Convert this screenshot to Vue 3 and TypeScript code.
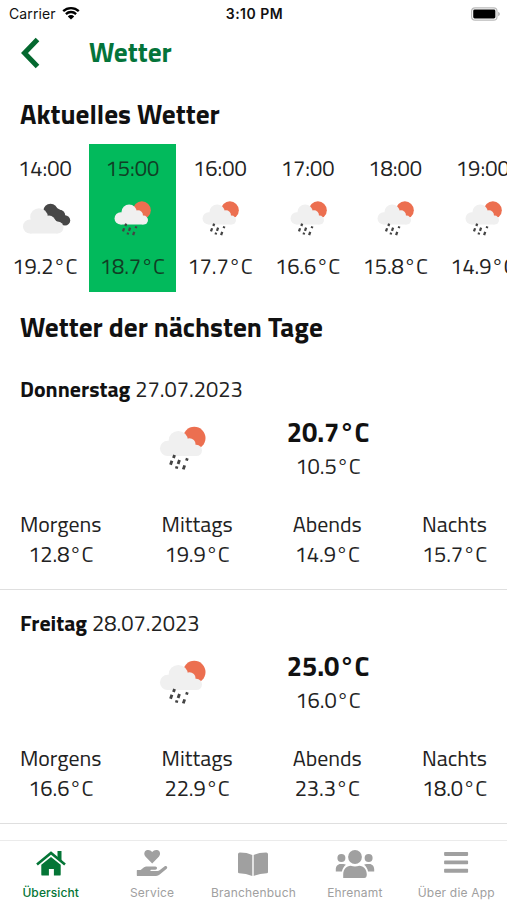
<script setup lang="ts">
interface Hour {
  time: string
  temp: string
  icon: 'cloud' | 'rain'
  active?: boolean
}
interface Day {
  name: string
  date: string
  max: string
  min: string
  parts: { label: string; temp: string }[]
}

const hours: Hour[] = [
  { time: '14:00', temp: '19.2', icon: 'cloud' },
  { time: '15:00', temp: '18.7', icon: 'rain', active: true },
  { time: '16:00', temp: '17.7', icon: 'rain' },
  { time: '17:00', temp: '16.6', icon: 'rain' },
  { time: '18:00', temp: '15.8', icon: 'rain' },
  { time: '19:00', temp: '14.9', icon: 'rain' },
]

const days: Day[] = [
  {
    name: 'Donnerstag',
    date: '27.07.2023',
    max: '20.7',
    min: '10.5',
    parts: [
      { label: 'Morgens', temp: '12.8' },
      { label: 'Mittags', temp: '19.9' },
      { label: 'Abends', temp: '14.9' },
      { label: 'Nachts', temp: '15.7' },
    ],
  },
  {
    name: 'Freitag',
    date: '28.07.2023',
    max: '25.0',
    min: '16.0',
    parts: [
      { label: 'Morgens', temp: '16.6' },
      { label: 'Mittags', temp: '22.9' },
      { label: 'Abends', temp: '23.3' },
      { label: 'Nachts', temp: '18.0' },
    ],
  },
]

const drops =
  'M16.9 31.6 15.8 34.6M14.200 37.500 12.800 41.600M21.900 36.800 20.500 40.900M29.900 35 29.100 37.400M19.400 43.200 18.700 45.500M27.200 42.200 25.800 46.300'
</script>

<template>
  <div class="screen">
    <header class="status">
      <div class="carrier">
        <span>Carrier</span>
        <svg class="wifi" viewBox="0 0 18 14">
          <path d="M1.2 5.2a11.2 11.2 0 0 1 15.6 0M3.9 8.1a7.3 7.3 0 0 1 10.2 0" fill="none" stroke="#000" stroke-width="2.3" />
          <path d="M9 13.6 5.8 10.4a4.6 4.6 0 0 1 6.4 0Z" />
        </svg>
      </div>
      <div class="clock">3:10 PM</div>
      <div class="power">
        <svg class="battery" viewBox="0 0 30 14">
          <rect x=".6" y=".6" width="26.3" height="12.8" rx="3.6" fill="#fff" stroke="#bbb" stroke-width="1.2" />
          <rect x="2.3" y="2.3" width="22.9" height="9.4" rx="1.5" />
          <path d="M28 4.7q2 .8 2 2.3t-2 2.3Z" fill="#bbb" />
        </svg>
      </div>
    </header>

    <div class="titlebar">
      <svg class="back" viewBox="0 0 20 32"><path d="M17.500 2.500 4.500 16 17.500 29.500" fill="none" stroke="#04682f" stroke-width="5" /></svg>
      <h1>Wetter</h1>
    </div>

    <main class="content">
      <h2 class="now">Aktuelles Wetter</h2>
      <div class="hours">
        <div v-for="h in hours" :key="h.time" class="hour" :class="{ active: h.active }">
          <span class="time">{{ h.time }}</span>
          <svg v-if="h.icon === 'cloud'" class="cloud" viewBox="0 0 48 32">
            <g fill="#474747">
              <circle cx="28.5" cy="9.8" r="7.1" /><circle cx="37.8" cy="14.2" r="5.4" /><circle cx="43" cy="19.4" r="5.2" />
              <path d="m30 4 10 6-2 13-10-8Z" />
            </g>
            <g fill="#eee">
              <circle cx="8" cy="25.5" r="7" /><circle cx="17" cy="16" r="8.8" /><circle cx="27" cy="21" r="6.5" /><circle cx="35.5" cy="26.5" r="6" />
              <path d="M8 20h24v5l3.500 7.500H8Z" />
            </g>
          </svg>
          <svg v-else class="rain" viewBox="0 0 50 50">
            <circle cx="37" cy="14.4" r="11.5" fill="#ec6f50" />
            <g class="puff">
              <circle cx="9.8" cy="24.9" r="7.8" /><circle cx="20.7" cy="17" r="9.9" /><circle cx="32" cy="20.9" r="6.4" /><circle cx="39.2" cy="27" r="5.7" />
              <path d="M9 20h25l5 7v5.7H9.8Z" />
            </g>
            <path class="drops" :d="drops" />
          </svg>
          <span class="temp">{{ h.temp }}°C</span>
        </div>
      </div>

      <h2 class="next">Wetter der nächsten Tage</h2>
      <section v-for="d in days" :key="d.name" class="day">
        <div class="date"><b>{{ d.name }}</b> <span>{{ d.date }}</span></div>
        <div class="summary">
          <svg class="rain" viewBox="0 0 50 50">
            <circle cx="37" cy="14.4" r="11.5" fill="#ec6f50" />
            <g class="puff">
              <circle cx="9.8" cy="24.9" r="7.8" /><circle cx="20.7" cy="17" r="9.9" /><circle cx="32" cy="20.9" r="6.4" /><circle cx="39.2" cy="27" r="5.7" />
              <path d="M9 20h25l5 7v5.7H9.8Z" />
            </g>
            <path class="drops" :d="drops" />
          </svg>
          <div class="range">
            <strong>{{ d.max }}°C</strong>
            <span class="temp">{{ d.min }}°C</span>
          </div>
        </div>
        <div class="parts">
          <div v-for="p in d.parts" :key="p.label" class="part">
            <span class="label">{{ p.label }}</span>
            <span class="temp">{{ p.temp }}°C</span>
          </div>
        </div>
      </section>
    </main>

    <nav class="tabs">
      <a class="tab current">
        <svg viewBox="0 0 32 28">
          <path d="M2 15.500 16 4l14 11.500" fill="none" stroke="currentColor" stroke-width="2.600" />
          <path d="M22.500 2H26.500v10L22.500 8.500ZM6.300 15.700 16 7.900l9.700 7.800v9.700q0 1.200-1.200 1.200h-5.600v-6.600h-5v6.600H7.500q-1.200 0-1.200-1.200Z" />
        </svg>
        <span>Übersicht</span>
      </a>
      <a class="tab">
        <svg viewBox="0 0 32 28">
          <path d="m16.200 14.500-6.600-6.800C7.500 5.500 8.200 2.300 10.400 1.300c2-.9 4.300-.3 5.800 1.600 1.500-1.900 3.800-2.500 5.800-1.600 2.200 1 2.900 4.200.8 6.400Z" />
          <path d="M1.300 20.900h3.300l2.500-2c1.300-1 2.800-1.400 4.400-1.400h7.800c2.300 0 2.300 3.200 0 3.200h-4.200q-.8 0-.8.6t.8.600h6.200c1 0 1.800-.3 2.600-.9l4.500-3.500c2-1.400 3.800.7 2.300 2.200l-7 5.900c-1 .9-2.200 1.300-3.600 1.300H1.300Q.8 26.900.8 26.300v-4.800q0-.6.500-.6Z" />
        </svg>
        <span>Service</span>
      </a>
      <a class="tab">
        <svg viewBox="0 0 32 28">
          <path d="M1 5.300Q1 3.500 3 3.600q7 0 12.300 2.300v21Q9 24.400 2.200 24.300 1 24.200 1 23ZM31 5.300q0-1.800-2-1.700-7 0-12.300 2.300v21q6.300-2.500 13.100-2.600 1.200-.1 1.200-1.300Z" />
        </svg>
        <span>Branchenbuch</span>
      </a>
      <a class="tab">
        <svg class="wide" viewBox="0 0 40 28">
          <circle cx="20" cy="8" r="6.900" /><circle cx="6.400" cy="9" r="4" /><circle cx="33.600" cy="9" r="4" />
          <path d="M8.200 29v-3.500c0-5 3.200-8.700 7.500-8.700q4.300 1.400 8.600 0c4.300 0 7.500 3.700 7.500 8.700 0 2.500-1 3.500-2.500 3.500ZM.8 22.600v-2.300c0-3 2-5.400 4.700-5.400h2.800c1 0 1.800.3 2.600.8-2 1.700-3.400 3.700-4 6.900ZM39.200 22.600v-2.300c0-3-2-5.400-4.700-5.400h-2.800c-1 0-1.800.3-2.600.8 2 1.700 3.400 3.700 4 6.900Z" />
        </svg>
        <span>Ehrenamt</span>
      </a>
      <a class="tab">
        <svg viewBox="0 0 32 28">
          <path d="M4.900 3h22.400q.8 0 .8.800v2.300q0 .8-.8.800H4.900q-.8 0-.8-.8V3.800q0-.8.800-.8Zm0 8.400h22.400q.8 0 .8.800v2.300q0 .8-.8.800H4.900q-.8 0-.8-.8v-2.300q0-.8.800-.8Zm0 8.400h22.400q.8 0 .8.800v2.300q0 .8-.8.800H4.900q-.8 0-.8-.8v-2.300q0-.8.800-.8Z" />
        </svg>
        <span>Über die App</span>
      </a>
    </nav>
  </div>
</template>

<style>
body { background: #fff; overflow: hidden; }
</style>

<style scoped>
.screen {
  display: flex; flex-direction: column;
  width: 507px; height: 900px; overflow: hidden;
  background: #fff; color: #222;
  font-family: "Titillium Web", Roboto, sans-serif;
}
svg { display: block; flex: none; overflow: visible; }
.status {
  display: grid; grid-template-columns: 1fr auto 1fr; align-items: center;
  height: 27px; padding: 0 7px 0 9px; flex: none;
  font-family: Inter, sans-serif; color: #111;
}
.carrier { display: flex; align-items: center; gap: 6px; font-size: 14px; letter-spacing: .1px; }
.wifi { width: 18px; height: 14px; margin-top: -2px; }
.clock { font-size: 14px; font-weight: 600; letter-spacing: .5px; }
.power { display: flex; justify-content: flex-end; }
.battery { width: 29px; height: 14px; }
.titlebar { display: flex; align-items: center; height: 52px; padding-left: 20px; flex: none; }
.back { width: 20px; height: 32px; }
h1 { margin: -2px 0 0 49px; font-size: 27.3px; line-height: 32px; font-weight: 700; color: #04743a; }
.content { flex: 1; min-height: 0; overflow: hidden; }
h2 { margin: 0; padding-left: 20px; font-size: 27.3px; font-weight: 700; line-height: 32px; color: #111; }
.now { padding-top: 19px; height: 46px; }
.hours { display: grid; grid-template-columns: repeat(6, 87.6px); padding-left: 1px; height: 148px; }
.hour { display: flex; flex-direction: column; align-items: center; padding-top: 11px; height: 137px; }
.active { background: #02ba5c; color: #113e25; }
.time, .temp { font-size: 21.9px; line-height: 26px; white-space: nowrap; }
.temp { letter-spacing: -.1px; }
.hour .rain { width: 39px; height: 39px; margin: 18px 0 15px 1px; }
.cloud { width: 48px; height: 32px; margin: 20px 0 20px 2px; }
.puff { fill: #f0f0f0; }
.drops { stroke: #444; stroke-width: 2.9; fill: none; }
.next { padding-top: 19px; height: 45px; }
.day { height: 233px; border-bottom: 1px solid #dfdfdf; }
.date { padding: 20px 20px 0; font-size: 21.9px; line-height: 26px; }
.date b { color: #111; }
.summary { display: grid; grid-template-columns: 50px auto; gap: 79px; padding: 13px 0 0 157px; height: 68px; }
.rain { width: 49px; height: 49px; margin: 9px 0 0 1px; }
.range { display: flex; flex-direction: column; align-items: center; width: 84px; }
strong { font-size: 27.3px; line-height: 34px; color: #111; white-space: nowrap; letter-spacing: -.1px; }
.range .temp { line-height: 34px; }
.parts { display: flex; justify-content: space-between; padding: 26px 20px 0; }
.part { display: flex; flex-direction: column; align-items: center; }
.label { font-size: 21.9px; line-height: 30px; }
.part .temp { line-height: 30px; }
.tabs {
  display: grid; grid-template-columns: repeat(5, 1fr);
  height: 59px; flex: none; border-top: 1px solid #ebebeb; color: #a0a0a0;
}
.tab { display: flex; flex-direction: column; align-items: center; padding-top: 8px; }
.tab svg { width: 32px; height: 28px; fill: currentColor; }
.tab .wide { width: 40px; }
.tab span { margin-top: 8px; font: 400 12px/16px Inter, sans-serif; letter-spacing: .2px; white-space: nowrap; }
.tab.current { color: #047536; }
.tab.current span { font-weight: 500; letter-spacing: .1px; }
</style>
